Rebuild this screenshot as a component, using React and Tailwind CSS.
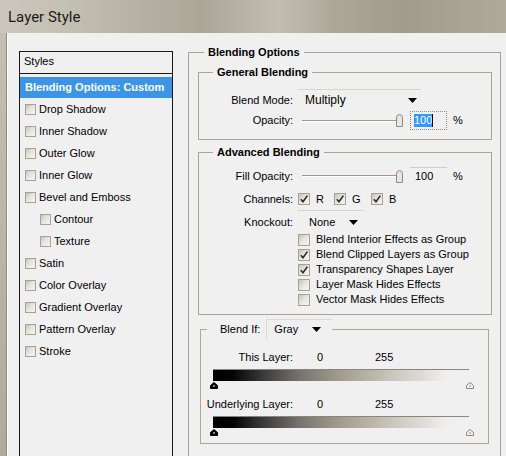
import React from 'react';

const STYLES = [
  { label: 'Drop Shadow' },
  { label: 'Inner Shadow' },
  { label: 'Outer Glow' },
  { label: 'Inner Glow' },
  { label: 'Bevel and Emboss' },
  { label: 'Contour', sub: true },
  { label: 'Texture', sub: true },
  { label: 'Satin' },
  { label: 'Color Overlay' },
  { label: 'Gradient Overlay' },
  { label: 'Pattern Overlay' },
  { label: 'Stroke' },
];

const OPTIONS = [
  { label: 'Blend Interior Effects as Group', checked: false },
  { label: 'Blend Clipped Layers as Group', checked: true },
  { label: 'Transparency Shapes Layer', checked: true },
  { label: 'Layer Mask Hides Effects', checked: false },
  { label: 'Vector Mask Hides Effects', checked: false },
];

function Check({ checked, small }) {
  return (
    <div
      className={`${small ? 'w-[11px] h-[11px]' : 'w-[12px] h-[12px]'} shrink-0 border border-[#a6a295] bg-[linear-gradient(135deg,#c7c3b8_0%,#e6e4de_45%,#f6f5f2_100%)]`}
    >
      {checked && (
        <svg viewBox="0 0 10 10" className="w-full h-full">
          <path d="M1.8 5.2 L4 7.8 L8.4 1.6" fill="none" stroke="#2b2b2b" strokeWidth="1.6" />
        </svg>
      )}
    </div>
  );
}

function Arrow({ className }) {
  return (
    <svg width="9" height="5" viewBox="0 0 9 5" className={className}>
      <polygon points="0,0 9,0 4.5,5" fill="#000" />
    </svg>
  );
}

function Slider() {
  return (
    <div className="relative ml-[9px] flex h-[13px] w-[101px] items-center">
      <div className="h-[2px] w-[98px] border-t border-[#9d998d] bg-white" />
      <svg width="7" height="13" viewBox="0 0 7 13" className="absolute right-0 top-0">
        <path d="M0.5 12.5 V4 Q0.5 0.5 3.5 0.5 Q6.5 0.5 6.5 4 V12.5 Z" fill="#e8e6e0" stroke="#8f8b80" />
      </svg>
    </div>
  );
}

function Thumb({ dark }) {
  return (
    <svg width="8" height="7" viewBox="0 0 8 7">
      <path
        d="M4 0.5 L7.5 3.5 V6.5 H0.5 V3.5 Z"
        fill={dark ? '#000' : '#f4f4f2'}
        stroke={dark ? '#000' : '#8a877e'}
      />
      <rect x="3.5" y="3" width="1" height="2" fill={dark ? '#fff' : '#8a877e'} />
    </svg>
  );
}

function GradientBar() {
  return (
    <>
      <div className="mt-[3px] ml-[12px] h-[12px] w-[256px] border-t border-[#8a867b] bg-[linear-gradient(90deg,#000_0%,#050505_8%,#3c3c3c_20%,#76746e_34%,#a29d8f_50%,#b9b5a8_62%,#cdcac0_72%,#dedcd6_82%,#efefef_91%,#f0f0f0_100%)]" />
      <div className="mt-[1px] ml-[9px] flex h-[7px] w-[264px] justify-between">
        <Thumb dark />
        <Thumb />
      </div>
    </>
  );
}

export default function App() {
  return (
    <div className="flex h-[456px] w-[506px] flex-col overflow-hidden font-['Liberation_Sans',Arial,sans-serif] text-[11px] leading-[13px] text-black">
      {/* title bar */}
      <div className="flex h-[33px] shrink-0 items-center pl-[8px] bg-[linear-gradient(90deg,#cbc7bc_0%,#c3bfb3_14%,#b4b0a3_28%,#aaa698_40%,#c1bdb1_55%,#aca899_66%,#a09c8e_80%,#aeaa9c_100%)]">
        <span className="pt-[2px] font-['Roboto',sans-serif] text-[15px] text-[#1c1c1c]">Layer Style</span>
      </div>

      <div className="flex min-h-0 flex-1">
        <div className="w-[7px] shrink-0 border-r border-[#8f8b80] bg-[linear-gradient(180deg,#c3bfb3,#aeaa9d)]" />
        <div className="flex flex-1 items-start border-l border-white bg-[#f0f0f0]">
          {/* styles list */}
          <div className="mt-[18px] ml-[11px] w-[154px] self-stretch border-x border-t border-[#1a1a1a]">
            <div className="flex h-[22px] items-center border-b border-[#1a1a1a] pl-[4px] pb-[2px]">Styles</div>
            <div className="mt-[3px] flex h-[21px] items-center bg-[#3c94e6] pl-[5px] font-bold text-white">
              Blending Options: Custom
            </div>
            {STYLES.map((s) => (
              <div
                key={s.label}
                className={`flex h-[22px] items-center ${s.sub ? 'pl-[20px]' : 'pl-[5px]'}`}
              >
                <Check small />
                <span className="ml-[3px]">{s.label}</span>
              </div>
            ))}
          </div>

          {/* blending options */}
          <fieldset className="mt-[12px] ml-[15px] h-[420px] w-[313px] min-w-0 border border-[#a8a497]">
            <legend className="ml-[15px] px-[4px] font-bold leading-[14px]">Blending Options</legend>

            <fieldset className="mt-[6px] ml-[9px] mr-[8px] min-w-0 border border-[#a8a497] pt-[10px] pb-[9px]">
              <legend className="ml-[14px] px-[4px] font-bold leading-[14px]">General Blending</legend>
              <div className="flex h-[22px] items-center">
                <span className="w-[94px] text-right">Blend Mode:</span>
                <div className="ml-[5px] flex h-[22px] w-[123px] items-center border-t border-[#d6d3ca] pl-[7px]">
                  <span className="text-[12px]">Multiply</span>
                  <Arrow className="ml-[62px]" />
                </div>
              </div>
              <div className="flex h-[19px] items-center">
                <span className="w-[94px] text-right">Opacity:</span>
                <Slider />
                <div className="ml-[7px] flex h-[19px] w-[37px] items-center border border-dotted border-[#8e8a80] pl-[3px]">
                  <span className="bg-[#3399ff] text-white">100</span>
                  <span className="h-[13px] w-px bg-black" />
                </div>
                <span className="ml-[6px]">%</span>
              </div>
            </fieldset>

            <fieldset className="mt-[5px] ml-[9px] mr-[8px] min-w-0 border border-[#a8a497] pt-[7px] pb-[7px]">
              <legend className="ml-[14px] px-[4px] font-bold leading-[14px]">Advanced Blending</legend>
              <div className="flex h-[20px] items-center">
                <span className="w-[94px] text-right">Fill Opacity:</span>
                <Slider />
                <div className="ml-[7px] flex h-[19px] w-[37px] items-center border-t border-[#cfccc3] pl-[5px]">100</div>
                <span className="ml-[6px]">%</span>
              </div>
              <div className="mt-[3px] flex h-[20px] items-center">
                <span className="w-[94px] text-right">Channels:</span>
                <div className="ml-[5px] flex w-[36px] items-center">
                  <Check checked />
                  <span className="ml-[6px]">R</span>
                </div>
                <div className="flex w-[37px] items-center">
                  <Check checked />
                  <span className="ml-[6px]">G</span>
                </div>
                <div className="flex items-center">
                  <Check checked />
                  <span className="ml-[6px]">B</span>
                </div>
              </div>
              <div className="mt-[3px] flex h-[20px] items-center">
                <span className="w-[94px] text-right">Knockout:</span>
                <div className="ml-[5px] flex h-[24px] w-[66px] shrink-0 items-center border-t border-[#d6d3ca] pl-[11px]">
                  <span>None</span>
                  <Arrow className="ml-[14px]" />
                </div>
              </div>
              {OPTIONS.map((o) => (
                <div key={o.label} className="flex h-[15px] items-center pl-[99px]">
                  <Check checked={o.checked} />
                  <span className="ml-[6px]">{o.label}</span>
                </div>
              ))}
            </fieldset>

            <fieldset className="mt-[4px] ml-[11px] mr-[11px] min-w-0 border border-[#aaa69a] pt-[9px] pb-[7px]">
              <legend className="ml-[6px]">
                <div className="flex h-[20px] items-center pl-[13px]">
                  <span>Blend If:</span>
                  <div className="ml-[6px] flex h-[20px] w-[66px] items-center border-t border-l border-[#dcd9d0] pl-[7px]">
                    <span>Gray</span>
                    <Arrow className="ml-[14px]" />
                  </div>
                </div>
              </legend>
              <div className="flex h-[18px] items-center">
                <span className="w-[92px] text-right">This Layer:</span>
                <span className="ml-[24px] w-[58px]">0</span>
                <span>255</span>
              </div>
              <GradientBar />
              <div className="mt-[6px] flex h-[18px] items-center">
                <span className="w-[92px] text-right">Underlying Layer:</span>
                <span className="ml-[24px] w-[58px]">0</span>
                <span>255</span>
              </div>
              <GradientBar />
            </fieldset>
          </fieldset>
        </div>
      </div>
    </div>
  );
}
